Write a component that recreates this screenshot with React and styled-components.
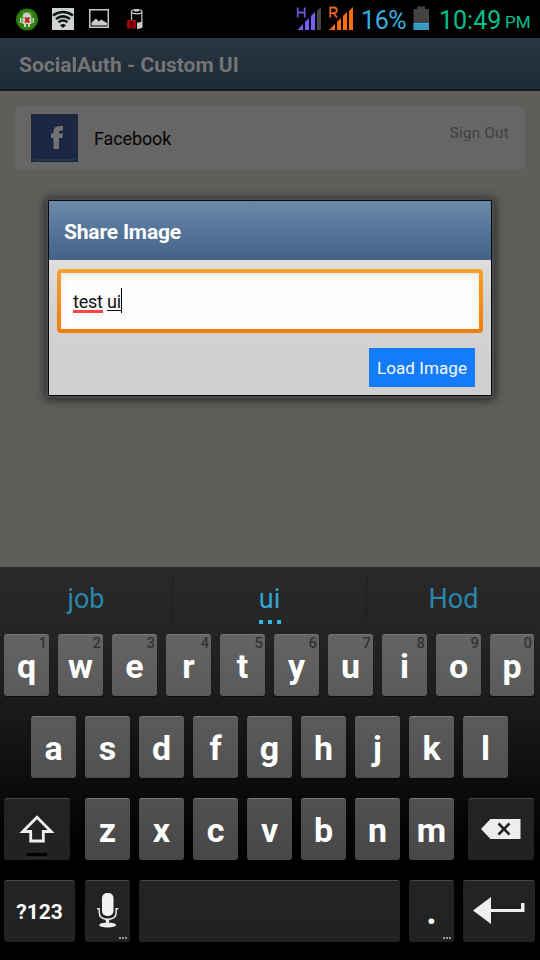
import React from "react";
import styled, { createGlobalStyle } from "styled-components";

const GlobalStyle = createGlobalStyle`
  * { box-sizing: border-box; }
  body { margin: 0; background: #000; font-family: Roboto, "Noto Sans", sans-serif; }
`;

const Screen = styled.div`
  position: relative;
  width: 540px;
  height: 960px;
  display: flex;
  flex-direction: column;
  overflow: hidden;
  background: #5f5e5b;
`;

const StatusBar = styled.header`
  height: 38px;
  flex: none;
  background: #000;
  display: flex;
  justify-content: space-between;
`;

const StatusText = styled.span`
  font-size: ${(p) => p.$size}px;
  line-height: ${(p) => p.$leading || 41}px;
  height: 38px;
  color: ${(p) => p.$color};
  width: ${(p) => p.$width}px;
  margin-left: ${(p) => p.$gap || 0}px;
  letter-spacing: ${(p) => p.$spacing || 0}px;
  white-space: nowrap;
`;

const StatusGroup = styled.div`
  display: flex;
`;

const Glyph = styled.svg`
  display: block;
  flex: none;
  margin-left: ${(p) => p.$gap || 0}px;
`;

const AppBar = styled.div`
  height: 53px;
  flex: none;
  padding-left: 19px;
  background: linear-gradient(#2b3643, #1b2a36);
  border-bottom: 2px solid #17191c;
  color: #757575;
  font-size: 21px;
  font-weight: 700;
  line-height: 54px;
`;

const Content = styled.main`
  flex: 1;
  padding: 15px;
`;

const AccountRow = styled.div`
  height: 64px;
  display: flex;
  padding: 8px 16px;
  border-radius: 6px;
  background: #666;
`;

const AccountName = styled.span`
  flex: 1;
  margin-left: 16px;
  font-size: 18px;
  line-height: 50px;
  color: #050505;
  letter-spacing: -0.12px;
`;

const SignOut = styled.span`
  font-size: 15px;
  line-height: 39px;
  color: #404040;
  letter-spacing: 0.35px;
`;

const Dialog = styled.section`
  position: absolute;
  left: 48px;
  top: 200px;
  width: 444px;
  height: 196px;
  border: 1px solid #080808;
  background: linear-gradient(#dedede 60px, #d2d2d2 110px, #d0d0d0);
  box-shadow: 0 0 0 2px #4a4a4a, 0 1px 9px 3px rgba(0, 0, 0, 0.6);
`;

const DialogTitle = styled.h2`
  margin: 0;
  height: 59px;
  padding-left: 15px;
  background: linear-gradient(#6b8aaa, #54749a 50%, #446386);
  color: #fff;
  font-size: 21px;
  line-height: 62px;
  font-weight: 700;
  letter-spacing: -0.18px;
`;

const InputFrame = styled.div`
  height: 64px;
  margin: 9px 8px 0;
  padding: 4px;
  border-radius: 4px;
  background: linear-gradient(#ff9f2b, #f47d0b);
`;

const InputField = styled.div`
  height: 56px;
  display: flex;
  padding: 15px 12px 0;
  background: #fdfdfd;
  box-shadow: inset 0 3px 7px rgba(0, 0, 0, 0.08);
  color: #111;
  font-size: 18px;
  line-height: 28px;
`;

const Word = styled.span`
  height: 25px;
  width: ${(p) => p.$width}px;
  margin-right: ${(p) => p.$gap || 0}px;
  white-space: nowrap;
  letter-spacing: -0.2px;
  background: linear-gradient(${(p) => p.$color}, ${(p) => p.$color}) 0 ${(p) => p.$line}px / 100% ${(p) => p.$thick}px no-repeat;
`;

const Caret = styled.span`
  width: 1px;
  height: 25px;
  background: #000;
`;

const LoadButton = styled.button`
  display: block;
  width: 106px;
  height: 39px;
  margin: 15px 16px 0 auto;
  padding: 1px 0 0;
  border: 0;
  background: #147cfb;
  color: #f4f8ff;
  font: 17px Roboto, sans-serif;
  letter-spacing: 0.08px;
  white-space: nowrap;
`;

const Keyboard = styled.div`
  height: 393px;
  flex: none;
  background: linear-gradient(#292929, #252525 60px, #1b1b1b 135px, #0a0a0a 230px, #000 285px);
`;

const Suggestions = styled.div`
  height: 67px;
  display: grid;
  grid-template-columns: 172px 194px 174px;
  padding-top: 6px;
`;

const Suggestion = styled.div`
  height: 48px;
  display: flex;
  flex-direction: column;
  align-items: center;
  border-left: ${(p) => (p.$first ? 0 : 1)}px solid #1c1c1c;
  color: ${(p) => (p.$active ? "#33a5d1" : "#2b86ab")};
  font-size: 27px;
  line-height: 53px;
`;

const SuggestionLabel = styled.span`
  height: 47px;
`;

const Dots = styled.div`
  display: flex;
  gap: ${(p) => p.$gap}px;
  flex: none;
`;

const Dot = styled.i`
  width: ${(p) => p.$size}px;
  height: ${(p) => p.$size}px;
  background: ${(p) => p.$color};
`;

const KeyRow = styled.div`
  height: 62px;
  margin-bottom: 20px;
  padding-left: ${(p) => p.$indent}px;
  display: flex;
  gap: 9px;
`;

const tones = {
  1: ["#646464", "#5a5a5a"],
  2: ["#5b5b5b", "#515151"],
  3: ["#515151", "#474747"],
  dark: ["#232323", "#222"],
};

const Key = styled.div`
  position: relative;
  flex: none;
  width: ${(p) => p.$width || 45}px;
  height: 62px;
  margin-left: ${(p) => p.$before || 0}px;
  border-radius: 3px;
  border-top: 1px solid ${(p) => (p.$tone === "dark" ? "#474747" : "#777")};
  background: linear-gradient(${(p) => tones[p.$tone].join(",")});
  box-shadow: 0 1px 1px rgba(0, 0, 0, 0.55);
  color: #fff;
  display: flex;
  justify-content: center;
  font-size: ${(p) => p.$size || 34}px;
  line-height: 63px;
  font-weight: 700;
`;

const KeyHint = styled.span`
  position: absolute;
  top: 0;
  right: 2px;
  font-size: 15px;
  line-height: 16px;
  font-weight: 500;
  color: #333;
`;

const Period = styled.i`
  width: 5px;
  height: 5px;
  margin-top: 38px;
  background: #fff;
`;

const PeriodLabel = styled.span`
  font-size: 38px;
`;

const MoreDots = styled.div`
  position: absolute;
  right: 3px;
  bottom: 3px;
`;

function More() {
  return (
    <MoreDots>
      <Dots $gap={1}>
        {[0, 1, 2].map((n) => <Dot key={n} $size={2} $color="#999" />)}
      </Dots>
    </MoreDots>
  );
}

function Notifications() {
  return (
    <Glyph width="160" height="38" viewBox="0 0 160 38">
      <circle cx="27" cy="19.5" r="11" fill="#2b7a0b" />
      <circle cx="27" cy="19.5" r="9" fill="#328511" />
      <path d="M22.5 17a4.5 4.5 0 0 1 9 0zM22.500 17.600h9v6.400h-9zM20 18h1.600v5H20zM32.400 18H34v5h-1.600zM24 24h2v3h-2zM28 24h2v3h-2zM23 11.500l2 3h-1zM31 11.500l-2 3h1z" fill="#c9d0c5" />
      <path d="M25.200 18l4 4.500m0-4.500l-4 4.500" stroke="#c91515" strokeWidth="2" />
      <rect x="52" y="8" width="22" height="22" fill="#cfd1d2" />
      <g fill="none" stroke="#101314" strokeWidth="2.600">
        <path d="M53 15.500Q63 8.500 73 15.500" />
        <path d="M56 19Q63 13.600 70 19" />
        <path d="M58.500 22.300Q63 18.700 67.500 22.300" />
      </g>
      <path d="M60 25.200Q63 23 66 25.200L63 28z" fill="#101314" />
      <rect x="89.750" y="9.750" width="18.500" height="17.500" fill="none" stroke="#c6c9ca" strokeWidth="1.500" />
      <path d="M91.500 25.500v-3l4.500-4 3 3 2-2 6 3.500v2.500z" fill="#c6c9ca" />
      <path d="M131.500 20V12m10.300 0v11" fill="none" stroke="#bfc2c3" strokeWidth="1.200" />
      <ellipse cx="136.700" cy="11.700" rx="5.300" ry="2.100" fill="none" stroke="#c8cbcc" strokeWidth="1.300" />
      <path d="M134 9.500h5v2h-5z" fill="#c8cbcc" />
      <path d="M137 22.700q3-.2 5.500-1.200v6q-2.500 1.500-5.500 1.400z" fill="#c8cbcc" />
      <rect x="127" y="20" width="9" height="8.500" fill="#9b0305" />
      <path d="M131.500 21v4m0 1.200v1.400" stroke="#210000" strokeWidth="1.800" />
    </Glyph>
  );
}

function Signals() {
  return (
    <Glyph width="62" height="38" viewBox="295 0 62 38">
      <path d="M297.700 7.500v10m7-10v10m-7-5h7" fill="none" stroke="#6854d8" strokeWidth="1.800" />
      <path d="M297.500 30l5.500-6v6zM305 30v-8l4-4v12zM311 30V16l4-4v18z" fill="#7760ff" />
      <path d="M317 30V11l4-4v23z" fill="#464646" />
      <path d="M330.300 17.500v-10h3.500q3 0 3 2.800t-3 2.800h-3.500m3.200 0l3.500 4.400" fill="none" stroke="#ec641c" strokeWidth="1.800" />
      <path d="M329 30l6-6v6zM337 30v-8l4-4v12zM343 30V16l4-4v18zM349 30V11l4-4v23z" fill="#ff6d0b" />
    </Glyph>
  );
}

function Battery() {
  return (
    <Glyph $gap={5} width="16" height="38" viewBox="413 0 16 38">
      <path d="M413.500 30V9h3.500V6.500h8V9h4v21z" fill="#424242" />
      <path d="M413.500 24H429v6h-15.500z" fill="#3797be" />
      <path d="M413.500 23H429v1.200h-15.500z" fill="#36aedb" />
    </Glyph>
  );
}

function FacebookLogo() {
  return (
    <Glyph width="47" height="48" viewBox="0 0 47 48">
      <rect width="47" height="48" fill="#182a36" />
      <rect x="1.500" y="1.500" width="44" height="44" rx="4" fill="#1b2745" />
      <path d="M3 44.500Q2.500 46 5 46h37q2.500 0 2-1.500" fill="none" stroke="#2d4a50" />
      <path d="M22.500 35V24H20v-4.500h2.500V18q0-6 6-6H32v4.500h-2q-2 0-2 2v1H32l-.6 4.500H28v11z" fill="#737373" />
    </Glyph>
  );
}

function ShiftIcon() {
  return (
    <Glyph width="66" height="61" viewBox="4 799 66 61">
      <path d="M37 817.300l14.200 14.200H43.300V841H30.700v-9.500h-7.900z" fill="none" stroke="#f0f0f0" strokeWidth="2.800" />
      <path d="M27 853h20v4H27z" fill="#000" />
      <path d="M27 857h20" stroke="#3a3a3a" />
    </Glyph>
  );
}

function MicIcon() {
  return (
    <Glyph width="45" height="61" viewBox="85 881 45 61">
      <rect x="102" y="893" width="11.500" height="23" rx="5" fill="#f1f1f1" />
      <path d="M97 908.700h2.200v3.500q0 7 8.500 7t8.500-7v-3.500h2.200" fill="none" stroke="#e6e6e6" strokeWidth="1.500" />
      <path d="M105 919h5l-1.200 3v2h-2.600v-2z" fill="#eee" />
      <ellipse cx="107.600" cy="925" rx="8.500" ry="2.400" fill="#eee" />
    </Glyph>
  );
}

function DeleteIcon() {
  return (
    <Glyph width="66" height="61" viewBox="468 799 66 61">
      <path d="M481 829l9.500-10H520.500v20H490.500z" fill="#ededed" />
      <path d="M498.500 823.500l11 11m0-11l-11 11" stroke="#222" strokeWidth="2.600" />
    </Glyph>
  );
}

function EnterIcon() {
  return (
    <Glyph width="72" height="61" viewBox="463 881 72 61">
      <path d="M473 910.500L491 897v12h30v-6h3.500v9H491v12z" fill="#f0f0f0" />
    </Glyph>
  );
}

export default function App() {
  return (
    <Screen>
      <GlobalStyle />
      <StatusBar>
        <Notifications />
        <StatusGroup>
          <Signals />
          <StatusText $size={25} $width={47} $gap={4} $spacing={-0.4} $color="#33aee0">16%</StatusText>
          <Battery />
          <StatusText $size={25} $width={65} $gap={10} $color="#06be8c">10:49</StatusText>
          <StatusText $size={17} $width={35} $gap={1} $leading={44} $color="#06be8c">PM</StatusText>
        </StatusGroup>
      </StatusBar>
      <AppBar>SocialAuth - Custom UI</AppBar>
      <Content>
        <AccountRow>
          <FacebookLogo />
          <AccountName>Facebook</AccountName>
          <SignOut>Sign Out</SignOut>
        </AccountRow>
      </Content>
      <Keyboard>
        <Suggestions>
          <Suggestion $first><SuggestionLabel>job</SuggestionLabel></Suggestion>
          <Suggestion $active>
            <SuggestionLabel>ui</SuggestionLabel>
            <Dots $gap={5}>{[0, 1, 2].map((n) => <Dot key={n} $size={4} $color="#33b5e5" />)}</Dots>
          </Suggestion>
          <Suggestion><SuggestionLabel>Hod</SuggestionLabel></Suggestion>
        </Suggestions>
        <KeyRow $indent={4}>
          {[..."qwertyuiop"].map((c, i) => (
            <Key key={c} $tone={1} $width={c === "p" ? 44 : 45}>
              {c}
              <KeyHint>{(i + 1) % 10}</KeyHint>
            </Key>
          ))}
        </KeyRow>
        <KeyRow $indent={31}>
          {[..."asdfghjkl"].map((c) => <Key key={c} $tone={2}>{c}</Key>)}
        </KeyRow>
        <KeyRow $indent={4}>
          <Key $tone="dark" $width={66}><ShiftIcon /></Key>
          {[..."zxcvbnm"].map((c, i) => <Key key={c} $tone={3} $before={i ? 0 : 6}>{c}</Key>)}
          <Key $tone="dark" $width={66} $before={5}><DeleteIcon /></Key>
        </KeyRow>
        <KeyRow $indent={4}>
          <Key $tone="dark" $width={71} $size={21}>?123</Key>
          <Key $tone="dark" $before={1}><MicIcon /><More /></Key>
          <Key $tone="dark" $width={261} />
          <Key $tone="dark" $size={36}>.<More /></Key>
          <Key $tone="dark" $width={72}><EnterIcon /></Key>
        </KeyRow>
      </Keyboard>
      <Dialog>
        <DialogTitle>Share Image</DialogTitle>
        <InputFrame>
          <InputField>
            <Word $width={30} $gap={4} $color="#ff4444" $line={22} $thick={3}>test</Word>
            <Word $width={14} $color="#111" $line={22} $thick={1}>ui</Word>
            <Caret />
          </InputField>
        </InputFrame>
        <LoadButton>Load Image</LoadButton>
      </Dialog>
    </Screen>
  );
}
